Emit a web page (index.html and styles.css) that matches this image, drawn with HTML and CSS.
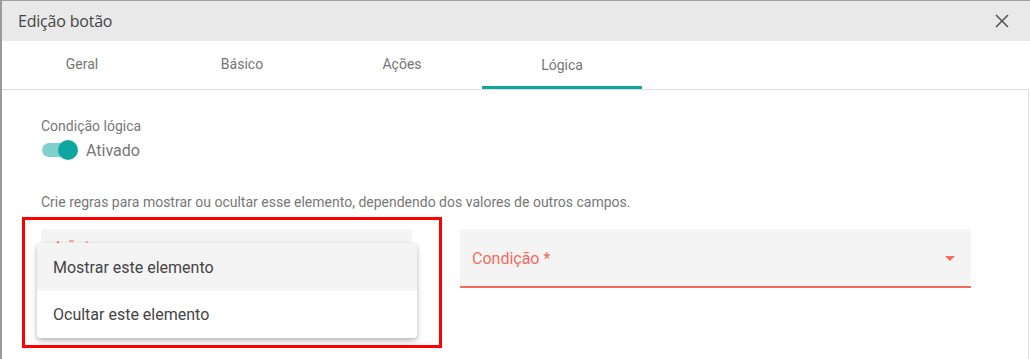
FILE: index.html
```html
<!DOCTYPE html>
<html lang="pt-BR">
<head>
    <meta charset="UTF-8">
    <title>Edição botão</title>
    <link rel="stylesheet" href="styles.css">
</head>
<body>
    <div class="dialog">
        <div class="dialog-header">
            <span class="dialog-title">Edição botão</span>
            <svg class="close-icon" width="14" height="14" viewBox="0 0 14 14">
                <path d="M1 1 L13 13 M13 1 L1 13" stroke="#555" stroke-width="1.6" fill="none"/>
            </svg>
        </div>

        <div class="tabs">
            <div class="tab">Geral</div>
            <div class="tab">Básico</div>
            <div class="tab">Ações</div>
            <div class="tab active">Lógica</div>
        </div>

        <div class="panel">
            <div class="small-label">Condição lógica</div>
            <div class="toggle-row">
                <span class="toggle"><span class="knob"></span></span>
                <span class="toggle-text">Ativado</span>
            </div>

            <p class="hint">Crie regras para mostrar ou ocultar esse elemento, dependendo dos valores de outros campos.</p>

            <div class="fields">
                <div class="field field-action">
                    <span class="float-label">Ação *</span>
                    <!-- open menu of the Ação select -->
                    <ul class="menu">
                        <li class="menu-item hover">Mostrar este elemento</li>
                        <li class="menu-item">Ocultar este elemento</li>
                    </ul>
                </div>
                <div class="field field-cond">
                    <span class="field-label">Condição *</span>
                    <span class="arrow"></span>
                </div>
            </div>

            <div class="highlight"></div>
        </div>
    </div>
</body>
</html>
```

FILE: styles.css
```css
body {
    margin: 0;
    width: 1030px;
    height: 359px;
    overflow: hidden;
    background: #fff;
    font-family: Roboto, "Liberation Sans", sans-serif;
}
.dialog {
    height: 359px;
    box-sizing: border-box;
    border-top: 1px solid #a0a0a0;
    border-left: 2px solid #9a9a9a;
    display: flex;
    flex-direction: column;
}
.dialog-header {
    height: 40px;
    background-color: #e9e9e9;
    display: flex;
    align-items: center;
    justify-content: space-between;
    padding: 0 21px 0 16px;
    flex-shrink: 0;
}
.dialog-title {
    font-family: "Open Sans", sans-serif;
    font-size: 16px;
    font-weight: 500;
    color: #444;
    letter-spacing: -0.2px;
}
.close-icon {
    display: block;
}
.tabs {
    display: flex;
    height: 48px;
    flex-shrink: 0;
}
.tab {
    width: 160px;
    display: flex;
    align-items: center;
    justify-content: center;
    font-size: 14px;
    color: #757575;
    box-sizing: border-box;
    padding-bottom: 2px;
}
.tab.active {
    border-bottom: 3px solid #0fa5a0;
    padding-bottom: 0;
    padding-top: 2px;
}
.panel {
    position: relative;
    flex: 1;
    width: 1027px;
    box-sizing: border-box;
    border-top: 1px solid #dedede;
    border-right: 1px solid #dedede;
    padding: 28px 0 0 39px;
}
.small-label {
    font-size: 14px;
    color: #777;
    line-height: 16px;
}
.toggle-row {
    display: flex;
    align-items: center;
    height: 22px;
    margin-top: 5px;
}
.toggle {
    position: relative;
    width: 34px;
    height: 14px;
    border-radius: 7px;
    background-color: #82d0cd;
    margin-left: 1px;
}
.knob {
    position: absolute;
    right: -2px;
    top: -3px;
    width: 20px;
    height: 20px;
    border-radius: 50%;
    background-color: #0fa5a0;
}
.toggle-text {
    margin-left: 10px;
    font-size: 16px;
    color: #777;
}
.hint {
    margin: 33px 0 0;
    font-size: 14px;
    line-height: 16px;
    color: #777;
}
.fields {
    display: flex;
    gap: 48px;
    margin-top: 19px;
}
.field {
    position: relative;
    background-color: #f4f4f4;
    border-radius: 4px 4px 0 0;
    height: 58px;
    box-sizing: border-box;
}
.field-action {
    width: 371px;
}
.field-cond {
    width: 511px;
    border-bottom: 2px solid #f26b5e;
    display: flex;
    align-items: center;
    justify-content: space-between;
    padding: 2px 16px 0 12px;
    height: 59px;
}
.float-label {
    position: absolute;
    left: 13px;
    top: 10px;
    font-size: 12px;
    color: #f26b5e;
}
.field-label {
    font-size: 16px;
    color: #f46a5c;
}
.arrow {
    width: 0;
    height: 0;
    border-left: 5px solid transparent;
    border-right: 5px solid transparent;
    border-top: 5px solid #f26b5e;
}
.menu {
    position: absolute;
    left: -4px;
    top: 14px;
    width: 380px;
    margin: 0;
    padding: 0;
    list-style: none;
    background: #fff;
    border-radius: 4px;
    box-shadow: 0 2px 4px rgba(0, 0, 0, 0.2), 0 4px 8px rgba(0, 0, 0, 0.12);
    overflow: hidden;
    z-index: 2;
}
.menu-item {
    height: 47px;
    display: flex;
    align-items: center;
    padding-left: 16px;
    font-size: 16px;
    color: #444;
}
.menu-item.hover {
    height: 48px;
    background-color: #f4f4f4;
}
.highlight {
    position: absolute;
    left: 20px;
    top: 127px;
    width: 420px;
    height: 131px;
    box-sizing: border-box;
    border: 3px solid #ff0000;
    z-index: 3;
}
```
